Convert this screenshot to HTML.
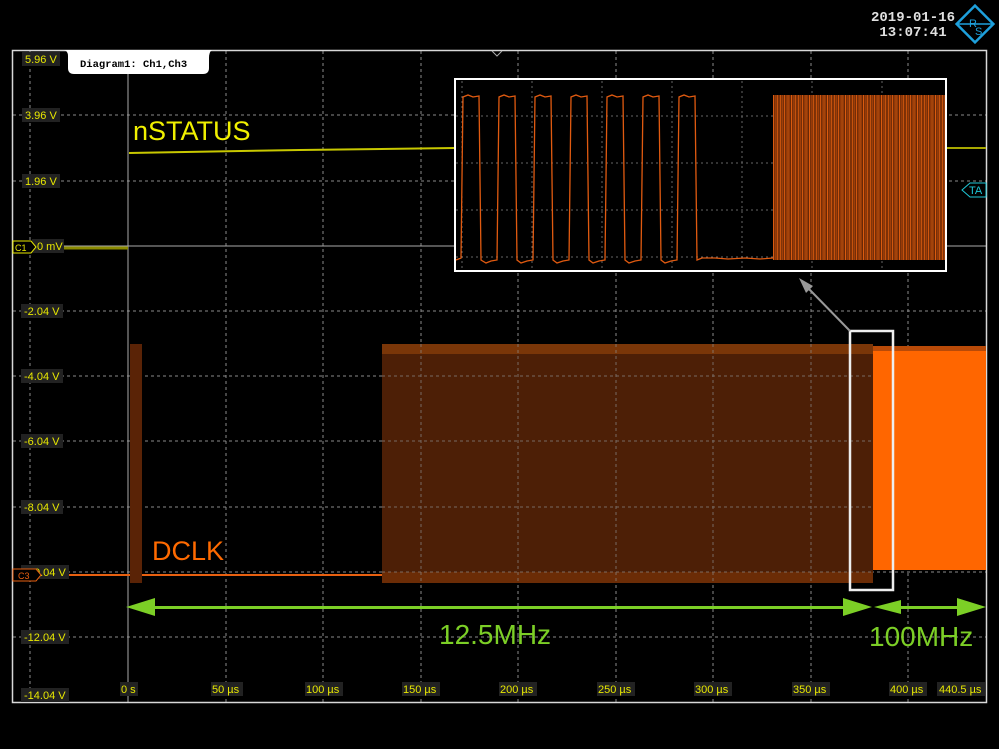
<!DOCTYPE html>
<html><head><meta charset="utf-8"><style>
html,body{margin:0;padding:0;background:#000;width:999px;height:749px;overflow:hidden}
svg{display:block}
.lbl{font-family:"Liberation Sans",sans-serif;font-size:11px;fill:#e8e800}
</style></head><body>
<svg width="999" height="749" viewBox="0 0 999 749" xmlns="http://www.w3.org/2000/svg">
<defs>
<pattern id="dense" x="773" y="0" width="3.6" height="300" patternUnits="userSpaceOnUse">
<rect x="0" y="0" width="3.6" height="300" fill="#5a2306"/>
<line x1="0.6" y1="0" x2="0.6" y2="300" stroke="#ff6a10" stroke-width="0.9"/>
<line x1="2.4" y1="0" x2="2.4" y2="300" stroke="#c24a08" stroke-width="0.7"/>
</pattern>
</defs>
<rect width="999" height="749" fill="#000"/>
<text x="913" y="21" text-anchor="middle" font-family="Liberation Mono,monospace" font-size="14" font-weight="bold" fill="#e0e0e0">2019-01-16</text>
<text x="913" y="36" text-anchor="middle" font-family="Liberation Mono,monospace" font-size="14" font-weight="bold" fill="#e0e0e0">13:07:41</text>
<g transform="translate(975,24) rotate(45)">
<rect x="-13" y="-13" width="26" height="26" fill="none" stroke="#1ea0dc" stroke-width="2.5"/>
<line x1="-13" y1="13" x2="13" y2="-13" stroke="#1ea0dc" stroke-width="1.5"/>
</g>
<text x="969" y="27" font-family="Liberation Sans,sans-serif" font-size="11" fill="#1ea0dc">R</text>
<text x="975" y="35" font-family="Liberation Sans,sans-serif" font-size="11" fill="#1ea0dc">S</text>

<g stroke="#8a8a8a" stroke-width="1" stroke-dasharray="3,3">
<line x1="30" y1="51" x2="30" y2="702"/>
<line x1="226" y1="51" x2="226" y2="702"/>
<line x1="323" y1="51" x2="323" y2="702"/>
<line x1="421" y1="51" x2="421" y2="702"/>
<line x1="518" y1="51" x2="518" y2="702"/>
<line x1="616" y1="51" x2="616" y2="702"/>
<line x1="713" y1="51" x2="713" y2="702"/>
<line x1="811" y1="51" x2="811" y2="702"/>
<line x1="908" y1="51" x2="908" y2="702"/>
<line x1="13" y1="115" x2="986" y2="115"/>
<line x1="13" y1="181" x2="986" y2="181"/>
<line x1="13" y1="311" x2="986" y2="311"/>
<line x1="13" y1="376" x2="986" y2="376"/>
<line x1="13" y1="441" x2="986" y2="441"/>
<line x1="13" y1="507" x2="986" y2="507"/>
<line x1="13" y1="572" x2="986" y2="572"/>
<line x1="13" y1="637" x2="986" y2="637"/>
</g>
<line x1="128" y1="51" x2="128" y2="702" stroke="#aaa" stroke-width="1"/>
<line x1="13" y1="246" x2="986" y2="246" stroke="#aaa" stroke-width="1"/>
<rect x="12.5" y="50.5" width="974" height="652" fill="none" stroke="#d8d8d8" stroke-width="1.5"/>
<path d="M492 51 L497 56 L502 51" fill="none" stroke="#aaa"/>

<line x1="13" y1="248" x2="128" y2="248" stroke="#8a8a00" stroke-width="3"/>
<path d="M129 153 L300 150 L455 148" stroke="#c8c800" stroke-width="2" fill="none"/>
<line x1="946" y1="148" x2="986" y2="148" stroke="#a8a800" stroke-width="2"/>
<line x1="13" y1="575" x2="382" y2="575" stroke="#e86010" stroke-width="2"/>
<rect x="130" y="344" width="12" height="239" fill="#5a2306"/>
<rect x="382" y="344" width="491" height="239" fill="#4d1f06"/>
<rect x="382" y="344" width="491" height="10" fill="#7a3608"/>
<rect x="382" y="572" width="491" height="11" fill="#6b2c06"/>
<rect x="873" y="348" width="113" height="222" fill="#ff6600"/>
<rect x="873" y="346" width="113" height="5" fill="#b84a08"/>
<g stroke="#8a8a8a" stroke-width="1" stroke-dasharray="3,3" opacity="0.7">
<line x1="421" y1="344" x2="421" y2="583"/><line x1="518" y1="344" x2="518" y2="583"/>
<line x1="616" y1="344" x2="616" y2="583"/><line x1="713" y1="344" x2="713" y2="583"/>
<line x1="811" y1="344" x2="811" y2="583"/>
<line x1="382" y1="376" x2="873" y2="376"/><line x1="382" y1="441" x2="873" y2="441"/>
<line x1="382" y1="507" x2="873" y2="507"/><line x1="382" y1="572" x2="873" y2="572"/>
</g>

<rect x="850" y="331" width="43" height="259" fill="none" stroke="#eee" stroke-width="2.5"/>
<line x1="850" y1="331" x2="808" y2="288" stroke="#999" stroke-width="2"/>
<path d="M799 278 L813 286 L806 293 Z" fill="#999"/>

<g fill="#7ccf26" stroke="none">
<rect x="150" y="606" width="700" height="3"/>
<path d="M126 607 L155 598 L155 616 Z"/>
<path d="M872 607 L843 598 L843 616 Z"/>
<path d="M874 607 L901 600 L901 614 Z"/>
<rect x="900" y="606" width="65" height="3"/>
<path d="M986 607 L957 598 L957 616 Z"/>
</g>

<text x="133" y="140" font-family="Liberation Sans,sans-serif" font-size="27" fill="#f0f000">nSTATUS</text>
<text x="152" y="560" font-family="Liberation Sans,sans-serif" font-size="27" fill="#ff6a00">DCLK</text>
<text x="439" y="644" font-family="Liberation Sans,sans-serif" font-size="28" fill="#7ccf26">12.5MHz</text>
<text x="869" y="646" font-family="Liberation Sans,sans-serif" font-size="28" fill="#7ccf26">100MHz</text>

<g>
<rect x="22" y="52" width="38" height="14" fill="#222"/><text class="lbl" x="25" y="63">5.96 V</text>
<rect x="22" y="108" width="38" height="14" fill="#222"/><text class="lbl" x="25" y="119">3.96 V</text>
<rect x="22" y="174" width="38" height="14" fill="#222"/><text class="lbl" x="25" y="185">1.96 V</text>
<rect x="32" y="239" width="32" height="14" fill="#222"/><text class="lbl" x="37" y="250">0 mV</text>
<rect x="21" y="304" width="42" height="14" fill="#222"/><text class="lbl" x="24" y="315">-2.04 V</text>
<rect x="21" y="369" width="42" height="14" fill="#222"/><text class="lbl" x="24" y="380">-4.04 V</text>
<rect x="21" y="434" width="42" height="14" fill="#222"/><text class="lbl" x="24" y="445">-6.04 V</text>
<rect x="21" y="500" width="42" height="14" fill="#222"/><text class="lbl" x="24" y="511">-8.04 V</text>
<rect x="21" y="565" width="48" height="14" fill="#222"/><text class="lbl" x="34" y="576">0.04 V</text>
<rect x="21" y="630" width="48" height="14" fill="#222"/><text class="lbl" x="24" y="641">-12.04 V</text>
<rect x="21" y="688" width="48" height="14" fill="#222"/><text class="lbl" x="24" y="699">-14.04 V</text>
</g>
<path d="M13 241 L31 241 L36 247 L31 253 L13 253 Z" fill="#000" stroke="#e8e800" stroke-width="1"/>
<text x="15" y="251" font-family="Liberation Sans,sans-serif" font-size="9" fill="#e8e800">C1</text>
<path d="M13 569 L36 569 L41 575 L36 581 L13 581 Z" fill="#000" stroke="#e86010" stroke-width="1"/>
<text x="18" y="579" font-family="Liberation Sans,sans-serif" font-size="9" fill="#e86010">C3</text>
<path d="M962 190 L970 183 L986 183 L986 197 L970 197 Z" fill="#000" stroke="#1ec8d8" stroke-width="1"/>
<text x="969" y="194" font-family="Liberation Sans,sans-serif" font-size="11" fill="#1ec8d8">TA</text>

<g>
<rect x="120" y="682" width="18" height="14" fill="#222"/><text class="lbl" x="121" y="693">0 s</text>
<rect x="211" y="682" width="32" height="14" fill="#222"/><text class="lbl" x="212" y="693">50 µs</text>
<rect x="305" y="682" width="38" height="14" fill="#222"/><text class="lbl" x="306" y="693">100 µs</text>
<rect x="402" y="682" width="38" height="14" fill="#222"/><text class="lbl" x="403" y="693">150 µs</text>
<rect x="499" y="682" width="38" height="14" fill="#222"/><text class="lbl" x="500" y="693">200 µs</text>
<rect x="597" y="682" width="38" height="14" fill="#222"/><text class="lbl" x="598" y="693">250 µs</text>
<rect x="694" y="682" width="38" height="14" fill="#222"/><text class="lbl" x="695" y="693">300 µs</text>
<rect x="792" y="682" width="38" height="14" fill="#222"/><text class="lbl" x="793" y="693">350 µs</text>
<rect x="889" y="682" width="38" height="14" fill="#222"/><text class="lbl" x="890" y="693">400 µs</text>
<rect x="937" y="682" width="48" height="14" fill="#222"/><text class="lbl" x="939" y="693">440.5 µs</text>
</g>

<path d="M64 50 L212 50 Q209 52 209 58 L209 68 Q209 74 203 74 L74 74 Q68 74 68 68 L68 56 Q68 51 64 50 Z" fill="#fff"/>
<text x="80" y="67" font-family="Liberation Mono,monospace" font-size="10.5" font-weight="bold" fill="#000">Diagram1: Ch1,Ch3</text>

<rect x="455" y="79" width="491" height="192" fill="#000" stroke="#fff" stroke-width="2"/>
<g stroke="#666" stroke-width="1" stroke-dasharray="2,3">
<line x1="462" y1="81" x2="462" y2="270"/><line x1="532" y1="81" x2="532" y2="270"/>
<line x1="602" y1="81" x2="602" y2="270"/><line x1="672" y1="81" x2="672" y2="270"/>
<line x1="742" y1="81" x2="742" y2="270"/><line x1="812" y1="81" x2="812" y2="270"/>
<line x1="882" y1="81" x2="882" y2="270"/>
<line x1="456" y1="116" x2="945" y2="116"/><line x1="456" y1="163" x2="945" y2="163"/>
<line x1="456" y1="210" x2="945" y2="210"/><line x1="456" y1="257" x2="945" y2="257"/>
</g>
<path d="M456 260 L461 258 L463 97 L468 95 L473 97 L479 96 L481 260 L486 263 L491 261 L497 260 L499 97 L504 95 L509 97 L515 96 L517 260 L521 263 L527 261 L533 260 L535 97 L540 95 L545 97 L551 96 L553 260 L557 263 L563 261 L569 260 L571 97 L576 95 L581 97 L587 96 L589 260 L593 263 L599 261 L605 260 L607 97 L612 95 L617 97 L623 96 L625 260 L629 263 L635 261 L641 260 L643 97 L648 95 L653 97 L659 96 L661 260 L665 263 L671 261 L677 260 L679 97 L684 95 L689 97 L695 96 L697 260 L702 258 L715 258 L728 259 L745 258 L760 259 L773 258" fill="none" stroke="#e05a10" stroke-width="1.3"/>
<rect x="773" y="95" width="172" height="165" fill="url(#dense)"/>
</svg>
</body></html>
